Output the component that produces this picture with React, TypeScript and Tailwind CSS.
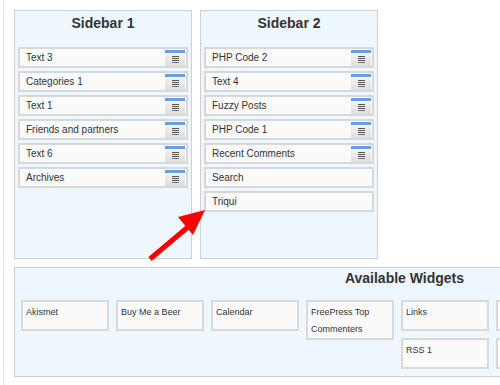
const sidebars = [
  {
    title: "Sidebar 1",
    items: [
      { name: "Text 3", handle: true },
      { name: "Categories 1", handle: true },
      { name: "Text 1", handle: true },
      { name: "Friends and partners", handle: true },
      { name: "Text 6", handle: true },
      { name: "Archives", handle: true },
    ],
  },
  {
    title: "Sidebar 2",
    items: [
      { name: "PHP Code 2", handle: true },
      { name: "Text 4", handle: true },
      { name: "Fuzzy Posts", handle: true },
      { name: "PHP Code 1", handle: true },
      { name: "Recent Comments", handle: true },
      { name: "Search", handle: false },
      { name: "Triqui", handle: false },
    ],
  },
];

// last column sits past the right edge of the window, only its boxes show
const widgetColumns = [
  ["Akismet"],
  ["Buy Me a Beer"],
  ["Calendar"],
  ["FreePress Top Commenters"],
  ["Links", "RSS 1"],
  ["", ""],
];

export default function App() {
  return (
    <div className="relative flex h-[385px] w-[500px] overflow-hidden bg-white font-['Liberation_Sans',Arial,sans-serif] text-[#333]">
      {/* thin page rule on the left */}
      <div className="h-full w-[4px] shrink-0 border-r border-[#dfe8f0] bg-[#fbfdff]" />

      <div className="flex shrink-0 flex-col pl-[10px] pt-[10px]">
        <div className="flex gap-[8px]">
          {sidebars.map((sb) => (
            <div
              key={sb.title}
              className="h-[249px] w-[178px] border border-[#cdd1d5] bg-[#eef6fe] px-[3px]"
            >
              <h3 className="h-[36px] text-center text-[14px] font-bold leading-[24px] text-[#333]">
                {sb.title}
              </h3>
              <div className="flex flex-col gap-[3px]">
                {sb.items.map((it) => (
                  <SidebarItem key={it.name} name={it.name} handle={it.handle} />
                ))}
              </div>
            </div>
          ))}
        </div>

        <div className="mt-[8px] h-[110px] w-[781px] border border-[#cdd1d5] bg-[#eef6fe]">
          <h3 className="h-[32px] pt-[1px] text-center text-[14px] font-bold leading-[18px] text-[#333]">
            Available Widgets
          </h3>
          <div className="flex items-start gap-[7px] pl-[6px]">
            {widgetColumns.map((col, i) => (
              <div key={i} className="flex w-[88px] flex-col gap-[7px]">
                {col.map((w, j) => (
                  <div
                    key={j}
                    className="min-h-[31px] border-2 border-[#d9d9d9] bg-[#fafafa] px-[3px] pt-[2px] text-[9px] leading-[17px]"
                  >
                    {w}
                  </div>
                ))}
              </div>
            ))}
          </div>
        </div>
      </div>

      {/* red annotation arrow */}
      <svg
        className="pointer-events-none absolute left-0 top-0"
        width="500"
        height="385"
        viewBox="0 0 500 385"
      >
        <line x1="150" y1="259" x2="188" y2="227" stroke="#ff0000" strokeWidth="5" />
        <polygon points="205,210 178,217 193,235" fill="#ff0000" />
      </svg>
    </div>
  );
}

function SidebarItem({ name, handle }: { name: string; handle: boolean }) {
  return (
    <div className="flex h-[21px] border-2 border-[#d8d8d8] bg-[#fafafa] pl-[6px] pr-[1px]">
      <span className="flex-1 self-center pt-[1px] text-[10px] leading-none">{name}</span>
      {handle && (
        <div className="mt-[1px] flex w-[20px] flex-col">
          <div className="h-[3px] bg-[#6a9fd5]" />
          <div className="flex flex-1 flex-col items-center justify-center gap-[1px] bg-gradient-to-b from-[#f4f4f4] to-[#dcdcdc]">
            <div className="h-[1px] w-[7px] bg-[#555]" />
            <div className="h-[1px] w-[7px] bg-[#555]" />
            <div className="h-[1px] w-[7px] bg-[#555]" />
            <div className="h-[1px] w-[7px] bg-[#777]" />
          </div>
        </div>
      )}
    </div>
  );
}
